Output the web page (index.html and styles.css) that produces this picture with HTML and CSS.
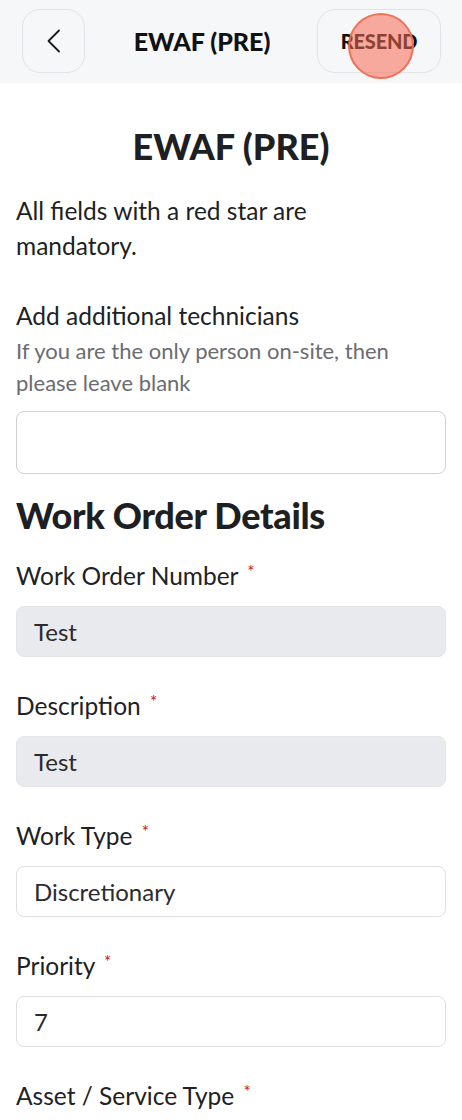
FILE: index.html
```html
<!DOCTYPE html>
<html>
<head>
<meta charset="utf-8">
<link rel="stylesheet" href="styles.css">
</head>
<body>
<header class="topbar">
  <button class="nav-btn back" aria-label="Back">
    <svg width="20" height="26" viewBox="0 0 20 26"><path d="M15 2.5 L4.5 13 L15 23.5" fill="none" stroke="#1a1a1a" stroke-width="1.8" stroke-linecap="round" stroke-linejoin="round"/></svg>
  </button>
  <div class="topbar-title">EWAF (PRE)</div>
  <button class="nav-btn resend">RESEND<span class="touch"></span></button>
</header>
<main class="content">
  <h1 class="page-title">EWAF (PRE)</h1>
  <p class="intro">All fields with a red star are mandatory.</p>

  <div class="field first">
    <div class="label">Add additional technicians</div>
    <div class="hint">If you are the only person on-site, then please leave blank</div>
    <div class="input tall"></div>
  </div>

  <h2 class="section">Work Order Details</h2>

  <div class="field after-section">
    <div class="label">Work Order Number <span class="req">*</span></div>
    <div class="input disabled">Test</div>
  </div>
  <div class="field">
    <div class="label">Description <span class="req">*</span></div>
    <div class="input disabled">Test</div>
  </div>
  <div class="field">
    <div class="label">Work Type <span class="req">*</span></div>
    <div class="input">Discretionary</div>
  </div>
  <div class="field">
    <div class="label">Priority <span class="req">*</span></div>
    <div class="input">7</div>
  </div>
  <div class="field">
    <div class="label">Asset / Service Type <span class="req">*</span></div>
  </div>
</main>
</body>
</html>
```
FILE: styles.css
```css
* { box-sizing: border-box; }
html, body { margin: 0; padding: 0; background: #ffffff; }
body {
  font-family: "Lato", "Liberation Sans", sans-serif;
  color: #1e1f22;
  width: 462px;
  height: 1120px;
  overflow: hidden;
}
.topbar {
  height: 83px;
  background: #f6f7f9;
  display: flex;
  align-items: center;
  justify-content: space-between;
  padding: 0 21px 1px 22px;
}
.nav-btn {
  height: 64px;
  border: 1px solid #e2e3e6;
  border-radius: 18px;
  background: #f6f7f9;
  display: flex;
  align-items: center;
  justify-content: center;
  font-family: inherit;
  padding: 0;
  position: relative;
}
.back { width: 63px; }
.resend {
  width: 124px;
  font-weight: 900;
  font-size: 20px;
  color: #111;
  letter-spacing: -0.2px;
}
.touch {
  position: absolute;
  left: 30px;
  top: 3px;
  width: 66px;
  height: 66px;
  border-radius: 50%;
  background: rgba(246, 105, 80, 0.55);
  border: 2px solid rgba(238, 108, 80, 0.9);
}
.topbar-title {
  font-weight: 900;
  font-size: 25px;
  color: #111;
  margin-left: 2px;
}
.content { padding: 0 16px; }
.page-title {
  margin: 41px 0 0;
  text-align: center;
  font-size: 36px;
  font-weight: 900;
  line-height: 44px;
  color: #1e1f22;
}
.intro {
  margin: 25px 0 0;
  font-size: 24.5px;
  line-height: 35px;
  max-width: 330px;
}
.field { margin-top: 33px; }
.field.first { margin-top: 37px; }
.field.after-section { margin-top: 23px; }
.label {
  font-size: 24.5px;
  line-height: 32px;
  height: 32px;
  color: #202124;
}
.req {
  color: #d0121b;
  font-size: 17px;
  line-height: 0;
  vertical-align: 7px;
  margin-left: 3px;
}
.hint {
  margin-top: 3px;
  font-size: 22px;
  line-height: 32px;
  color: #6b6c70;
}
.input {
  margin-top: 14px;
  height: 51px;
  border: 1px solid #dfe0e3;
  border-radius: 8px;
  padding: 0 17px;
  display: flex;
  align-items: center;
  font-size: 24px;
  color: #2a2b2e;
  background: #fff;
}
.input.tall { height: 63px; margin-top: 12px; border-color: #cfd0d3; }
.input.disabled { background: #e8eaed; border-color: #e3e5e8; }
.section {
  margin: 19px 0 0;
  font-size: 36px;
  font-weight: 900;
  line-height: 44px;
  letter-spacing: -0.3px;
}
```
